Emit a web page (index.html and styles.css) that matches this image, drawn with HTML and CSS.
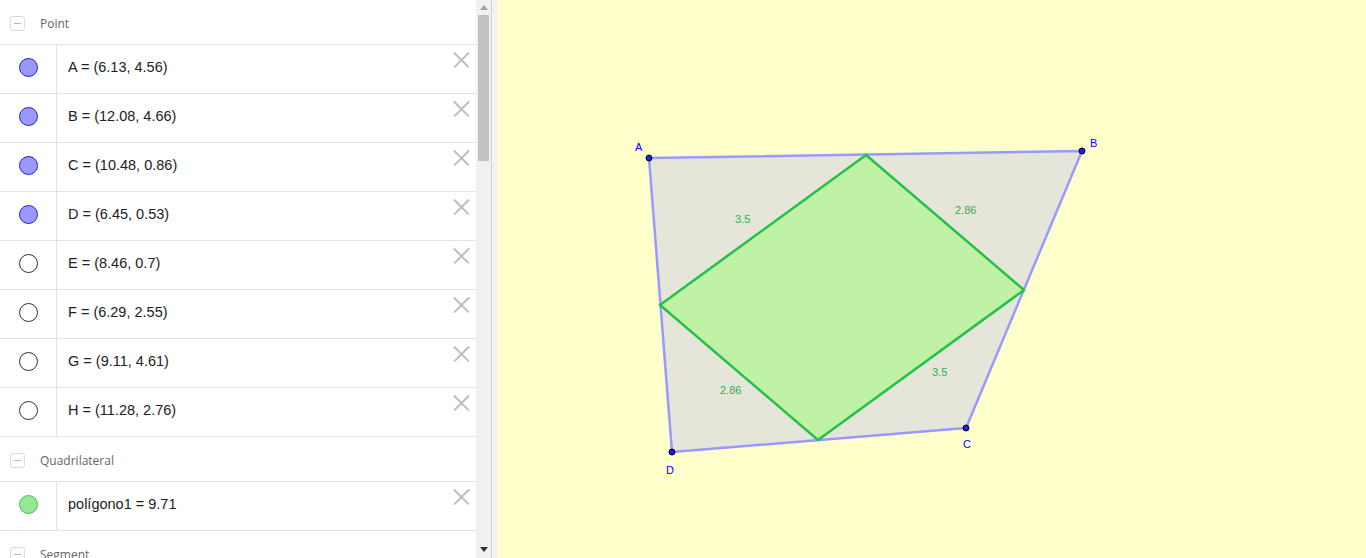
FILE: index.html
```html
<!DOCTYPE html>
<html>
<head>
<meta charset="utf-8">
<link rel="stylesheet" href="styles.css">
</head>
<body>
<div class="app">
  <div class="algebra">
    <div class="group">
      <span class="toggle"></span><span class="gname">Point</span>
    </div>
    <div class="row"><div class="marble m-blue"></div><div class="expr">A = (6.13, 4.56)</div><span class="del"></span></div>
    <div class="row"><div class="marble m-blue"></div><div class="expr">B = (12.08, 4.66)</div><span class="del"></span></div>
    <div class="row"><div class="marble m-blue"></div><div class="expr">C = (10.48, 0.86)</div><span class="del"></span></div>
    <div class="row"><div class="marble m-blue"></div><div class="expr">D = (6.45, 0.53)</div><span class="del"></span></div>
    <div class="row"><div class="marble m-empty"></div><div class="expr">E = (8.46, 0.7)</div><span class="del"></span></div>
    <div class="row"><div class="marble m-empty"></div><div class="expr">F = (6.29, 2.55)</div><span class="del"></span></div>
    <div class="row"><div class="marble m-empty"></div><div class="expr">G = (9.11, 4.61)</div><span class="del"></span></div>
    <div class="row"><div class="marble m-empty"></div><div class="expr">H = (11.28, 2.76)</div><span class="del"></span></div>
    <div class="group">
      <span class="toggle"></span><span class="gname">Quadrilateral</span>
    </div>
    <div class="row"><div class="marble m-green"></div><div class="expr">polígono1 = 9.71</div><span class="del"></span></div>
    <div class="group">
      <span class="toggle"></span><span class="gname">Segment</span>
    </div>
  </div>
  <div class="scrollbar">
    <div class="arrow up"></div>
    <div class="thumb"></div>
    <div class="arrow down"></div>
  </div>
  <div class="divider"></div>
  <div class="graphics">
    <svg width="868" height="558" viewBox="498 0 868 558" xmlns="http://www.w3.org/2000/svg">
      <polygon points="649,158 1082,151 966,428 672,452" fill="#e5e5da" stroke="#9999ff" stroke-width="2.5" stroke-linejoin="round"/>
      <polygon points="866,155 1024,290 818,440 660,305" fill="#c0f2a6" stroke="#22c24a" stroke-width="2.5" stroke-linejoin="round"/>
      <g fill="#1a1aff" stroke="#000" stroke-width="1">
        <circle cx="649" cy="158" r="3"/>
        <circle cx="1082" cy="151" r="3"/>
        <circle cx="966" cy="428" r="3"/>
        <circle cx="672" cy="452" r="3"/>
      </g>
      <g class="plabel">
        <text x="635" y="151">A</text>
        <text x="1090" y="147">B</text>
        <text x="963" y="448">C</text>
        <text x="666" y="474">D</text>
      </g>
      <g class="slabel">
        <text x="735" y="223">3.5</text>
        <text x="955" y="214">2.86</text>
        <text x="720" y="394">2.86</text>
        <text x="932" y="376">3.5</text>
      </g>
    </svg>
  </div>
</div>
</body>
</html>
```

FILE: styles.css
```css
html, body {
  margin: 0;
  padding: 0;
  width: 1366px;
  height: 558px;
  overflow: hidden;
  background: #ffffff;
}

.app {
  display: flex;
  width: 1366px;
  height: 558px;
  font-family: "Liberation Sans", Arial, sans-serif;
}

.algebra {
  width: 476px;
  flex: none;
  height: 558px;
  overflow: hidden;
  background: #fff;
}

.group {
  height: 45px;
  display: flex;
  align-items: center;
  border-bottom: 1px solid #e2e2e2;
  box-sizing: border-box;
  padding-top: 2px;
}

.toggle {
  width: 13px;
  height: 13px;
  margin-left: 10px;
  border: 1px solid #dcdcdc;
  border-radius: 3px;
  position: relative;
  flex: none;
}

.toggle::after {
  content: "";
  position: absolute;
  left: 3px;
  top: 6px;
  width: 7px;
  height: 1px;
  background: #b8b8b8;
}

.gname {
  margin-left: 15px;
  font-family: "Open Sans", sans-serif;
  font-size: 12px;
  color: #666;
}

.row {
  height: 49px;
  display: flex;
  align-items: stretch;
  border-bottom: 1px solid #e2e2e2;
  box-sizing: border-box;
  position: relative;
}

.marble {
  width: 57px;
  flex: none;
  border-right: 1px solid #e2e2e2;
  box-sizing: border-box;
  position: relative;
}

.marble::after {
  content: "";
  position: absolute;
  left: 19px;
  top: 13px;
  width: 19px;
  height: 19px;
  border-radius: 50%;
  box-sizing: border-box;
}

.m-blue::after {
  background: #9999ff;
  border: 1px solid #2020e8;
}

.m-empty::after {
  background: #fff;
  border: 1px solid #333;
}

.m-green::after {
  background: #99e699;
  border: 1px solid #33cc55;
}

.expr {
  padding-left: 11px;
  display: flex;
  align-items: center;
  padding-bottom: 4px;
  font-family: "Liberation Sans", Arial, sans-serif;
  font-size: 14.5px;
  color: #222;
  white-space: pre;
}

.del {
  position: absolute;
  right: 6px;
  top: 6px;
  width: 17px;
  height: 17px;
}

.del::before, .del::after {
  content: "";
  position: absolute;
  left: -2px;
  top: 8px;
  width: 21px;
  height: 1.5px;
  background: #bdbdbd;
  transform: rotate(45deg);
}

.del::after {
  transform: rotate(-45deg);
}

.scrollbar {
  width: 15px;
  flex: none;
  height: 558px;
  background: #f1f1f1;
  display: flex;
  flex-direction: column;
  align-items: center;
  border-right: 1px solid #cfcfcf;
}

.arrow {
  width: 0;
  height: 0;
  border-left: 4px solid transparent;
  border-right: 4px solid transparent;
}

.arrow.up {
  margin-top: 5px;
  border-bottom: 5px solid #a3a3a3;
}

.thumb {
  width: 11px;
  height: 146px;
  margin-top: 5px;
  background: #c1c1c1;
}

.arrow.down {
  margin-top: auto;
  margin-bottom: 6px;
  border-top: 5px solid #333;
}

.divider {
  width: 6px;
  flex: none;
  background: #f3f3f3;
}

.graphics {
  flex: 1;
  height: 558px;
  background: #ffffcc;
  overflow: hidden;
}

.graphics svg {
  display: block;
}

.plabel text {
  font-family: "Liberation Sans", Arial, sans-serif;
  font-size: 11px;
  fill: #0000ff;
}

.slabel text {
  font-family: "Liberation Sans", Arial, sans-serif;
  font-size: 11px;
  fill: #22b64a;
}
```
